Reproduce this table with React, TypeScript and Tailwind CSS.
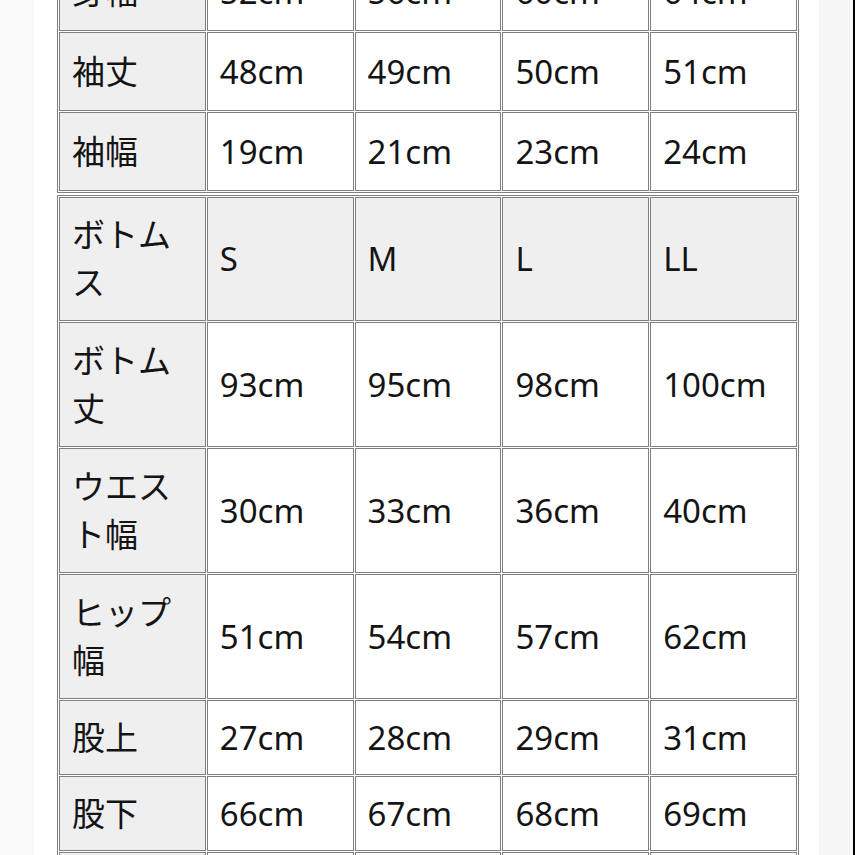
const topRows = [
  { label: "身幅", values: ["52cm", "56cm", "60cm", "64cm"] },
  { label: "袖丈", values: ["48cm", "49cm", "50cm", "51cm"] },
  { label: "袖幅", values: ["19cm", "21cm", "23cm", "24cm"] },
];

const bottomRows = [
  { label: "ボトム丈", values: ["93cm", "95cm", "98cm", "100cm"], tall: true },
  { label: "ウエスト幅", values: ["30cm", "33cm", "36cm", "40cm"], tall: true },
  { label: "ヒップ幅", values: ["51cm", "54cm", "57cm", "62cm"], tall: true },
  { label: "股上", values: ["27cm", "28cm", "29cm", "31cm"], tall: false },
  { label: "股下", values: ["66cm", "67cm", "68cm", "69cm"], tall: false },
  { label: "裾幅", values: ["18cm", "19cm", "20cm", "21cm"], tall: false },
];

const cell = "border border-[#7f7f7f] px-[12px] align-middle text-left font-normal";

const App = () => {
  return (
    <div
      className="flex h-[855px] w-full overflow-hidden bg-white text-[33px] leading-[48px] text-[#141414]"
      style={{ fontFamily: '"Noto Sans", "Noto Sans CJK JP", sans-serif' }}
    >
      <div className="w-[34px] shrink-0 bg-[#f9f9f9]" />

      <div className="flex-1 pl-[23px]">
        <table className="-mt-[50px] w-[742px] table-fixed border-separate border-spacing-[1px] border border-[#7f7f7f]">
          <tbody>
            {topRows.map((row) => (
              <tr key={row.label}>
                <td className={`${cell} h-[79px] bg-[#efefef]`}>{row.label}</td>
                {row.values.map((v, i) => (
                  <td key={i} className={`${cell} h-[79px] bg-white`}>
                    {v}
                  </td>
                ))}
              </tr>
            ))}
          </tbody>
        </table>

        <table className="mt-[2px] w-[742px] table-fixed border-separate border-spacing-[1px] border border-[#7f7f7f]">
          <tbody>
            <tr>
              <th className={`${cell} h-[124px] bg-[#efefef]`}>ボトムス</th>
              {["S", "M", "L", "LL"].map((s) => (
                <th key={s} className={`${cell} h-[124px] bg-[#efefef]`}>
                  {s}
                </th>
              ))}
            </tr>
            {bottomRows.map((row) => (
              <tr key={row.label}>
                <td className={`${cell} ${row.tall ? "h-[125px]" : "h-[75px]"} bg-[#efefef]`}>
                  {row.label}
                </td>
                {row.values.map((v, i) => (
                  <td key={i} className={`${cell} ${row.tall ? "h-[125px]" : "h-[75px]"} bg-white`}>
                    {v}
                  </td>
                ))}
              </tr>
            ))}
          </tbody>
        </table>
      </div>

      <div className="w-[36px] shrink-0 border-r-2 border-black bg-[#f7f7f7]" />
    </div>
  );
};

export default App;
